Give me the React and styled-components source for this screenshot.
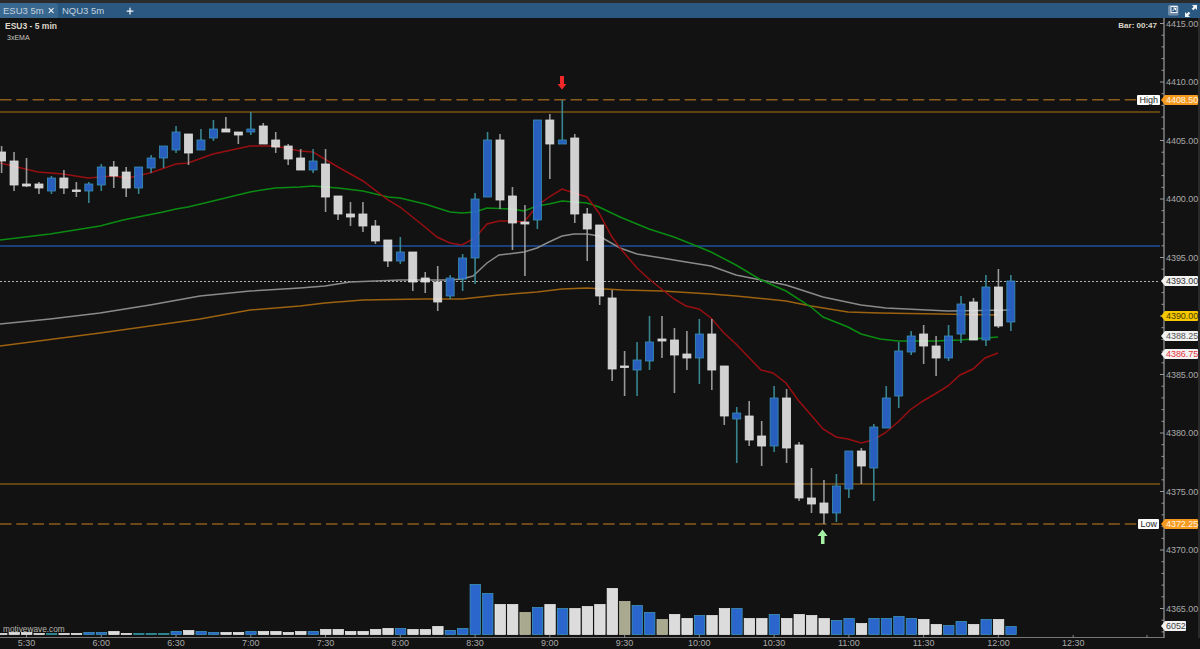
import React from "react";
import styled, { createGlobalStyle } from "styled-components";
import { X, Plus } from "lucide-react";

const GlobalStyle = createGlobalStyle`
    html, body, #root {
        margin: 0;
        height: 100%;
        background: #121212;
    }
    body {
        font-family: "Liberation Sans", Arial, sans-serif;
        overflow: hidden;
    }
`;

const Page = styled.div`
    display: grid;
    grid-template-columns: 1165px 1fr;
    grid-template-rows: 18px 1fr 11px;
    width: 1200px;
    height: 649px;
    background: #121212;
`;

const TabBar = styled.div`
    grid-column: 1 / 3;
    display: flex;
    align-items: stretch;
    box-sizing: border-box;
    border-top: 3px solid #2b2b2b;
    background: #2a5880;
    color: #c4d2df;
    font-size: 9.5px;
`;

const Tab = styled.div`
    display: flex;
    align-items: center;
    gap: 3px;
    box-sizing: border-box;
    width: ${props => props.$active ? "58px" : "auto"};
    padding: 0 ${props => props.$active ? "3px" : "4px"};
    border-radius: 0 3px 0 0;
    background: ${props => props.$active ? "#38678f" : "transparent"};
    white-space: nowrap;
`;

const AddTab = styled.div`
    display: flex;
    align-items: center;
    margin-left: 17px;
    color: #f2f5f8;
`;

const WindowButtons = styled.div`
    display: flex;
    align-items: center;
    gap: 6px;
    margin-left: auto;
    padding-right: 3px;
`;

const Plot = styled.div`
    position: relative;
    overflow: hidden;
    svg {
        display: block;
    }
`;

const Legend = styled.div`
    position: absolute;
    top: 3px;
    left: 5px;
`;

const Title = styled.div`
    color: #ddd7c9;
    font-size: 8.5px;
    font-weight: 700;
    line-height: 11px;
`;

const Study = styled.div`
    margin: 1px 0 0 2px;
    color: #c8c8c0;
    font-size: 7px;
    line-height: 9px;
`;

const BarTimer = styled.div`
    position: absolute;
    top: 3px;
    right: 8px;
    color: #ddd7c9;
    font-size: 8px;
    font-weight: 700;
    line-height: 10px;
`;

const Watermark = styled.div`
    position: absolute;
    bottom: 4px;
    left: 3px;
    color: #b4b4ac;
    font-size: 8.3px;
    line-height: 10px;
`;

const LevelTag = styled.div`
    position: absolute;
    right: ${props => props.$right}px;
    height: 10px;
    padding: 0 2px;
    border-radius: 1px;
    background: #fff;
    color: #222;
    font-size: 9px;
    line-height: 10px;
    transform: translateY(-50%);
`;

const PriceAxis = styled.div`
    position: relative;
    border-right: 2px solid #2a2a2a;
`;

const PriceLabel = styled.div`
    position: absolute;
    left: 1px;
    color: #a9a9a9;
    font-size: 9px;
    letter-spacing: -0.05px;
    line-height: 10px;
    transform: translateY(-50%);
`;

const PriceTag = styled.div`
    position: absolute;
    left: 0;
    width: ${props => props.$short ? "20px" : "32px"};
    height: 10px;
    padding-left: 1px;
    border-radius: 0 1px 1px 0;
    background: ${props => props.$bg};
    color: ${props => props.$color};
    font-size: 9px;
    letter-spacing: -0.05px;
    line-height: 10px;
    transform: translateY(-50%);

    &::before {
        content: "";
        position: absolute;
        top: 0;
        left: -4px;
        border-top: 5px solid transparent;
        border-bottom: 5px solid transparent;
        border-right: 4px solid ${props => props.$bg};
    }
`;

const TimeAxis = styled.div`
    position: relative;
`;

const TimeLabel = styled.div`
    position: absolute;
    top: 0;
    color: #a9a9a9;
    font-size: 9px;
    line-height: 11px;
    transform: translateX(-50%);
`;

const TIMES = ["5:30","6:00","6:30","7:00","7:30","8:00","8:30","9:00","9:30","10:00","10:30","11:00","11:30","12:00","12:30"];
const PRICES = [4415,4410,4405,4400,4395,4385,4380,4375,4370,4365];
const TAGS = [
    { price: 4408.5, text: "4408.50", bg: "#f59a1e", color: "#fff3e0" },
    { price: 4393, text: "4393.00", bg: "#f2f2f2", color: "#333" },
    { price: 4390, text: "4390.00", bg: "#f6c800", color: "#4a3c00" },
    { price: 4388.25, text: "4388.25", bg: "#f2f2f2", color: "#555" },
    { price: 4386.75, text: "4386.75", bg: "#f2f2f2", color: "#e8323c" },
    { price: 4372.25, text: "4372.25", bg: "#f59a1e", color: "#fff3e0" },
];

const priceY = price => 23.5 + (4415 - price) * 11.7;
const barX = i => 1.6 + i * 12.46;

// b = blue, w = white: type, body top, body bottom, wick top, wick bottom
const CANDLES = [
    ["w",152,161,146,173],["w",161,185,152,191],["w",184,186,158,187],["w",184,188,182,194],["b",178,191,176,194],
    ["w",178,188,170,194],["w",190,191.5,182,197],["b",184,191,182,203],["b",167,185,164,191],["w",167,176,161,188],
    ["w",172,188,167,197],["b",167,188,167,194],["b",158,168,155,173],["b",146,158,146,168],["b",132,150,126,153],
    ["w",134,153,134,165],["b",140,150,129,150],["b",129,138,120,141],["w",129,132,117,132],["w",132,135,132,144],
    ["b",129,132,112,135],["w",126,144,123,144],["w",140,147,132,153],["w",146,159,144,165],["w",158,170,149,170],
    ["b",161,170,149,173],["w",164,197,149,212],["w",196,214,196,220],["w",214,217,202,226],["w",214,226,202,232],
    ["w",226,241,220,244],["w",240,261,240,267],["b",252,261,237,264],["w",252,282,252,291],["w",278,282,272,293],
    ["w",282,302,266,311],["b",278,296,275,299],["b",258,279,254,291],["b",199,258,193,284],["b",140,197,132,197],
    ["w",140,200,134,209],["w",196,223,187,250],["w",222,224,205,276],["b",120,220,120,229],["w",120,144,114,179],
    ["b",140,144,100,144],["w",138,214,134,223],["w",214,229,208,261],["w",225,296,225,305],["w",298,369,290,381],
    ["w",366,367.5,351,396],["b",360,370,342,396],["b",342,361,316,370],["w",339,341,316,358],["w",340,355,328,393],
    ["w",354,358,331,370],["b",334,358,319,384],["w",334,370,319,390],["w",366,416,366,425],["b",413,419,407,463],
    ["w",416,440,401,446],["w",436,446,421,466],["b",398,446,386,452],["w",398,448,389,463],["w",445,498,442,501],
    ["w",498,504,468,513],["w",503,513,480,524],["b",486,513,474,522],["b",451,489,451,498],["w",451,466,448,484],
    ["b",427,468,424,501],["b",398,428,386,428],["b",351,396,342,408],["b",336,352,331,355],["w",334,346,325,364],
    ["w",346,358,336,376],["b",336,358,325,361],["b",304,334,296,343],["w",302,340,298,340],["b",287,340,275,346],
    ["w",287,326,269,328],["b",281,322,275,331],
];

const VOLUME = [1,2,2,1,1,1,1,2,2,3,1,1,1,1,3,4,3,2,2,2,3,3,3,2,3,3,5,5,3,3,5,6,6,5,5,8,4,6,50,41,30,30,22,27,30,26,26,28,30,46,33,29,22,15,20,16,19,19,26,26,16,16,20,16,20,19,16,14,16,11,16,16,18,16,15,10,9,13,10,15,15,8];
const VOLUME_COLORS = "wwwwtwwbbwwtttbwbbwwbwwwwbwwwwwwbwwwbbbbwwkbwbwwwwkbbkwwbwwbwwbwwwwbbwbbbbwwbbwbwb";

const RED = [[0,163],[38,172],[63,174],[88,178],[113,176],[128,178],[150,173],[176,164],[188,163],[213,154],[250,146],[275,146],[300,151],[313,152],[338,167],[363,181],[388,200],[400,207],[425,227],[437,237],[450,243],[462,245],[475,238],[487,224],[499,221],[512,221],[524,222],[537,206],[549,197],[562,189],[574,193],[587,197],[599,213],[612,237],[620,248],[637,268],[649,279],[674,299],[686,306],[699,309],[711,318],[724,333],[736,344],[761,370],[773,373],[786,383],[798,400],[811,415],[823,429],[836,437],[848,439],[861,443],[873,440],[885,433],[898,422],[910,410],[923,401],[935,394],[948,386],[960,375],[973,369],[985,358],[998,353]];
const GREEN = [[0,240],[50,234],[100,226],[123,220],[163,212],[176,209],[188,207],[213,201],[250,192],[275,188],[300,187],[313,186],[338,188],[363,191],[388,197],[400,198],[425,204],[450,212],[462,213],[475,212],[487,208],[512,209],[524,211],[537,206],[549,204],[562,201],[587,203],[599,207],[620,217],[649,229],[674,237],[699,247],[711,252],[736,265],[761,280],[786,291],[811,307],[823,317],[848,327],[861,334],[880,339],[898,341],[935,341],[960,340],[998,337]];
const GRAY = [[0,324],[50,319],[100,313],[150,305],[200,296],[250,291],[300,288],[325,286],[350,282],[375,281],[400,280],[450,280],[462,279],[473,276],[487,263],[499,255],[524,252],[537,248],[549,242],[562,236],[574,234],[587,234],[599,236],[620,248],[637,254],[662,258],[686,262],[711,266],[736,275],[761,280],[786,285],[823,297],[861,305],[886,308],[948,311],[1010,310]];
const ORANGE = [[0,346],[100,333],[200,319],[250,310],[300,306],[325,303],[363,300],[424,299],[462,299],[499,295],[537,292],[562,289],[587,288],[623,290],[662,291],[711,294],[736,296],[786,301],[811,306],[848,312],[880,313],[998,315]];

const toPoints = line => line.map(p => p.join(",")).join(" ");

const VOLUME_FILL = { w: "#dcdcdc", b: "#2a66cc", t: "#2f9aa5", k: "#a9a98f" };
const VOLUME_EDGE = { w: "#f4f4f4", b: "#3f9fc4", t: "#2f9aa5", k: "#c2c2a8" };

function Candle({ data, index }) {
    const [type, top, bottom, wickTop, wickBottom] = data;
    const x = barX(index);
    const blue = type === "b";
    return (
        <g opacity="0.9">
            <line x1={x} x2={x} y1={wickTop} y2={wickBottom} stroke={blue ? "#3d929e" : "#a8a8a8"} strokeWidth="1.6" />
            <rect x={x - 4} y={top} width="8" height={bottom - top} fill={blue ? "#2b67d0" : "#e6e6e6"} stroke={blue ? "#3f9fc4" : "#f2f2f2"} strokeWidth="0.8" />
        </g>
    );
}

function ChartDrawing() {
    const ticks = [];
    for (let p = 4415; p >= 4363; p--) ticks.push(p);
    return (
        <svg width="1165" height="620" viewBox="0 18 1165 620">
            <g fill="none">
                <line x1="0" x2="1138" y1="99.7" y2="99.7" stroke="#8c5c1c" strokeWidth="1.6" strokeDasharray="11.5 4.8" />
                <line x1="0" x2="1160" y1="112" y2="112" stroke="#7c5414" strokeWidth="1.6" />
                <line x1="0" x2="1160" y1="246" y2="246" stroke="#1f4f9f" strokeWidth="1.3" />
                <line x1="0" x2="1160" y1="281.5" y2="281.5" stroke="#b5b5b5" strokeWidth="1" strokeDasharray="2 2" />
                <line x1="0" x2="1160" y1="484" y2="484" stroke="#7c5414" strokeWidth="1.6" />
                <line x1="0" x2="1141" y1="524" y2="524" stroke="#8c5c1c" strokeWidth="1.6" strokeDasharray="11.5 4.8" />
                <polyline points={toPoints(ORANGE)} stroke="#9c6210" strokeWidth="1.5" />
                <polyline points={toPoints(GRAY)} stroke="#8a8a8a" strokeWidth="1.5" />
                <polyline points={toPoints(GREEN)} stroke="#0a8c12" strokeWidth="1.5" />
                <polyline points={toPoints(RED)} stroke="#980f12" strokeWidth="1.5" />
            </g>
            {CANDLES.map((c, i) => <Candle key={i} data={c} index={i} />)}
            {VOLUME.map((h, i) => (
                <rect key={i} x={barX(i) - 5} y={634.5 - h} width="10.4" height={h} fill={VOLUME_FILL[VOLUME_COLORS[i]]} stroke={VOLUME_EDGE[VOLUME_COLORS[i]]} strokeWidth="0.7" />
            ))}
            {/* signal arrows */}
            <path d="M560 76h4v8h2.500L562 89.500 557.500 84H560z" fill="#f0282a" />
            <path d="M821 544v-8h-3.500l5-6.500 5 6.500H824.500v8z" fill="#a6f0a4" />
            {/* axes */}
            <line x1="0" x2="1164" y1="637.5" y2="637.5" stroke="#777" />
            <line x1="1164" x2="1164" y1="18" y2="638" stroke="#8a8a8a" strokeWidth="1.4" />
            {ticks.map(p => (
                <line key={p} x1={p % 5 === 0 ? 1160 : 1161.5} x2="1164" y1={priceY(p)} y2={priceY(p)} stroke="#999" />
            ))}
            {TIMES.map((t, i) => (
                <line key={t} x1={barX(2 + i * 6)} x2={barX(2 + i * 6)} y1="635" y2="638" stroke="#888" />
            ))}
            <line x1="1147" x2="1147" y1="635" y2="638" stroke="#888" />
        </svg>
    );
}

function RestoreIcon() {
    return (
        <svg width="11" height="11" viewBox="0 0 11 11">
            <rect x="0" y="0" width="10.500" height="10.500" rx="1.500" fill="#6f8da8" />
            <rect x="3" y="1.500" width="6" height="6" fill="#2a5880" stroke="#f0f4f7" />
            <path d="M4.500 6 7.500 3M5.200 3H7.500V5.300" fill="none" stroke="#fff" strokeWidth="1" />
        </svg>
    );
}

function ExpandIcon() {
    return (
        <svg width="12" height="12" viewBox="0 0 12 12" fill="#f2f5f8">
            <path d="M7 0h5v5l-1.700-1.700-2 2-1.600-1.600 2-2zM5 12H0V7l1.700 1.700 2-2 1.600 1.600-2 2z" />
        </svg>
    );
}

export default function App() {
    return (
        <>
            <GlobalStyle />
            <Page>
                <TabBar>
                    <Tab $active>ESU3 5m <X size={9} strokeWidth={3} color="#eef2f6" /></Tab>
                    <Tab>NQU3 5m</Tab>
                    <AddTab><Plus size={10} strokeWidth={3} /></AddTab>
                    <WindowButtons>
                        <RestoreIcon />
                        <ExpandIcon />
                    </WindowButtons>
                </TabBar>
                <Plot>
                    <ChartDrawing />
                    <Legend>
                        <Title>ESU3 - 5 min</Title>
                        <Study>3xEMA</Study>
                    </Legend>
                    <BarTimer>Bar: 00:47</BarTimer>
                    <Watermark>motivewave.com</Watermark>
                    <LevelTag $right={5} style={{ top: priceY(4408.5) - 18 }}>High</LevelTag>
                    <LevelTag $right={6} style={{ top: priceY(4372.25) - 18 }}>Low</LevelTag>
                </Plot>
                <PriceAxis>
                    {PRICES.map(p => (
                        <PriceLabel key={p} style={{ top: priceY(p) - 18 }}>{p.toFixed(2)}</PriceLabel>
                    ))}
                    {TAGS.map(t => (
                        <PriceTag key={t.text} $bg={t.bg} $color={t.color} style={{ top: priceY(t.price) - 18 }}>{t.text}</PriceTag>
                    ))}
                    <PriceTag $short $bg="#f2f2f2" $color="#444" style={{ top: 608 }}>6052</PriceTag>
                </PriceAxis>
                <TimeAxis>
                    {TIMES.map((t, i) => (
                        <TimeLabel key={t} style={{ left: barX(2 + i * 6) }}>{t}</TimeLabel>
                    ))}
                </TimeAxis>
            </Page>
        </>
    );
}
